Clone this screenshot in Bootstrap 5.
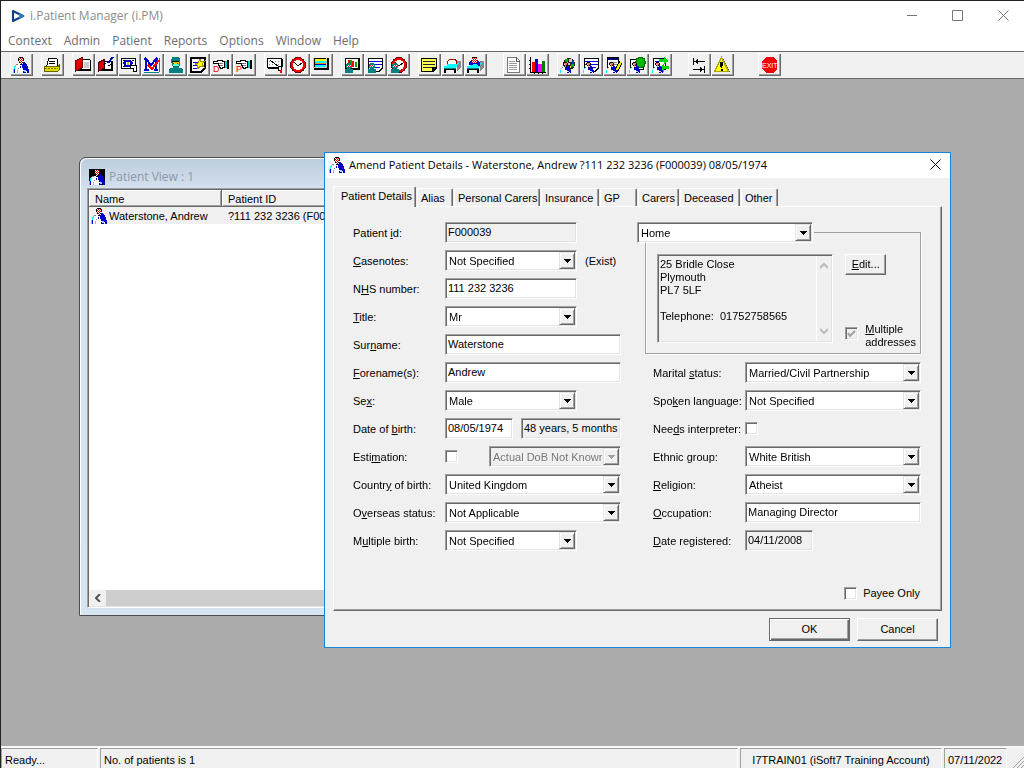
<!DOCTYPE html>
<html lang="en">
<head>
<meta charset="utf-8">
<meta name="viewport" content="width=device-width, initial-scale=1">
<title>i.Patient Manager (i.PM)</title>
<link href="https://cdn.jsdelivr.net/npm/bootstrap@5.3.0/dist/css/bootstrap.min.css" rel="stylesheet">
<script src="https://cdn.jsdelivr.net/npm/bootstrap@5.3.0/dist/js/bootstrap.bundle.min.js" defer></script>
<style>
:root{--face:#f0f0f0;--shade:#a0a0a0;--dark:#696969;--lite:#e3e3e3}
body{font:11px/13px "Liberation Sans",Arial,sans-serif;color:#000;background:var(--face)}
svg{display:block;flex:none}
button,input,select,textarea{font:inherit;color:inherit;border-radius:0}
.ui-font{font-family:"Open Sans","Segoe UI",sans-serif;font-size:12px;line-height:16px}
.cap-font{font-family:"Open Sans","Segoe UI",sans-serif;font-size:11px;line-height:16px}
.app{min-height:100vh;border-top:1px solid #222;border-left:1px solid #222}
.app-title{height:29px;color:#8c8c8c;padding:0 15px 0 10px;gap:5px}
.app-menu{height:21px;gap:12px;padding:0 7px}
.app-menu a{color:#6d6d6d;text-decoration:none}
.glyph-btn{border:0;background:none;padding:0;color:#777}
.toolbar{height:28px;padding:1px 9px 0;border-top:1px solid #696969;border-bottom:1px solid #696969;background:var(--face)}
.tool{width:23px;height:23px;border:0;padding:0;background:var(--face);box-shadow:inset 1px 1px #fff,inset -1px -1px var(--dark),inset -2px -2px var(--shade)}
.toolbar svg{shape-rendering:crispEdges}
.desk{background:#ababab;min-height:660px}
.statusbar{height:22px;border-top:2px solid #f8f8f8;gap:2px;background:var(--face)}
.pane{border:1px solid;border-color:var(--shade) #fff #fff var(--shade);height:21px;padding:5px 3px 0;white-space:nowrap}
.sunk{border:1px solid;border-color:var(--shade) #fff #fff var(--shade);box-shadow:inset 1px 1px var(--dark),inset -1px -1px var(--lite)}
.bevel{border:1px solid;border-color:#fff var(--dark) var(--dark) #fff;box-shadow:inset -1px -1px var(--shade);background:var(--face)}

.win-list{left:78px;top:78px;width:640px;height:459px;border:1px solid #4c4c54;border-radius:7px 7px 0 0;box-shadow:inset 1px 1px #fff;background:linear-gradient(#bccbdb,#d5e2f0 32px,#d7e4f2);padding:0 7px 7px}
.win-list .cap{height:30px;padding:8px 0 0 2px;color:#8e98a4;gap:4px}
.listbox{background:#fff}
.grid-list{border-collapse:separate;border-spacing:0;table-layout:fixed;width:100%;margin:1px}
.grid-list th{font-weight:400;height:17px;padding:2px 6px 0;background:var(--face);border-right:1px solid var(--dark);border-bottom:1px solid var(--dark);box-shadow:inset 1px 1px #fff,inset -1px -1px var(--shade)}
.grid-list td{height:17px;padding:1px 6px 0;background:var(--face);white-space:nowrap}
.grid-list td:first-child{padding:1px 2px 0}
.hscroll{height:16px;margin:0 1px 1px;background:#cdcdcd}
.hscroll button{width:17px;background:var(--face)}

.dlg{left:323px;top:73px;width:627px;border:1px solid #1883d7;background:var(--face)}
.dlg-cap{height:25px;background:#fff;padding:0 9px 2px 4px;gap:4px}
.dlg-body{padding:8px 8px 6px}
.tabs{gap:1px}
.tabs button{height:18px;background:var(--face);border:1px solid;border-color:#fff var(--dark) transparent #fff;border-bottom:0;box-shadow:inset -1px 0 var(--shade);border-radius:2px 2px 0 0;padding:1px 0 0 3px;text-align:left;white-space:nowrap}
.tabs button.active{height:21px;margin-bottom:-1px;padding:0 0 2px 7px;position:relative;z-index:1}
.tabpane{border:1px solid;border-color:#fff var(--dark) var(--dark) #fff;box-shadow:inset -1px -1px var(--shade);padding:15px 19px 10px}
.cols{gap:16px}
.col-l{width:268px}
.col-r{width:284px}
.frm{display:grid;grid-template-columns:92px 1fr;grid-auto-rows:21px;row-gap:7px;align-items:center}
.frm label,.frm .note{padding-top:2px}
.frm label,.chk-lbl{white-space:nowrap}
.chk-lbl{gap:7px}
.inset16{padding-left:16px}
.w-short{width:132px}
.w-date{width:68px}
.w-age{width:100px}
.fld{height:21px;padding:0 2px 2px;background:#fff;outline:0}
.fld[readonly]{background:var(--face)}
.combo{position:relative;height:21px;background:#fff}
.combo select{appearance:none;border:0;background:none;width:100%;height:19px;padding:1px 18px 0 3px;display:block;outline:0}
.combo select:disabled{color:#777;opacity:1}
.combo.off{background:var(--face)}
.combo .drop{position:absolute;right:1px;top:1px;width:16px;height:17px;pointer-events:none;display:flex;align-items:center;justify-content:center;border-color:var(--lite) var(--dark) var(--dark) var(--lite);box-shadow:inset 1px 1px #fff,inset -1px -1px var(--shade)}
.combo .drop svg{margin-left:1px}
.tick{appearance:none;width:13px;height:13px;margin:0;background:#fff;flex:none;display:block}
.tick:disabled{background:var(--face) url("data:image/svg+xml,%3Csvg xmlns='http://www.w3.org/2000/svg' viewBox='0 0 11 11'%3E%3Cpath d='M2 5l2 3 5-5' fill='none' stroke='%23a0a0a0' stroke-width='2'/%3E%3C/svg%3E") center/11px no-repeat}
.group{border:1px solid var(--shade);box-shadow:1px 1px #fff,inset 1px 0 #fff;margin:0 0 8px 8px;padding:0 4px 10px 11px;height:132px}
.group legend{float:none;font:inherit;width:177px;margin:0 0 11px -20px;padding:0 1px 0 0;background:var(--face)}
.addr{width:176px;height:89px}
.addr textarea{border:0;background:none;resize:none;padding:3px 2px;outline:0;overflow:hidden;width:100%}
.addr .vs{width:17px;padding:7px 0;border-left:1px solid #fff;margin:1px}
.addr-side{height:95px}
.btn-edit{width:41px;height:21px;padding:0}
.btn-dlg{width:81px;height:23px;padding:0}
.default-btn{border-color:var(--dark);box-shadow:inset 1px 1px #fff,inset -1px -1px var(--dark),inset -2px -2px var(--shade)}
.payee{gap:6px;padding:36px 2px 0 0}
.foot{gap:7px;padding:7px 4px 0}
</style>
</head>
<body>
<svg width="0" height="0" class="position-absolute" aria-hidden="true">
 <defs>
 <pattern id="chk" width="2" height="2" patternUnits="userSpaceOnUse"><path fill="#fff" d="M0 0h2v2H0z"/><path fill="#e00000" d="M0 0h1v1H0zM1 1h1v1H1z"/></pattern>
 <symbol id="doc" viewBox="0 0 16 16">
  <path fill="#fff" d="M3 7h6v9H1v-5h1V8h1z"/>
  <path fill="#0ff" d="M2 8h1v2H2v3H1v3H0v-4h1V9h1zM4 13h1v3H4z"/>
  <path fill="#0000c8" d="M1 12h1v4H1zM10 5h2v1h1v1h1v2h1v3h1v4h-2v-2h-1v2H9v-2H8v-3H7V9h2V7h1z"/>
  <path fill="#fff" d="M8 9h1v2h1v2h2v1h-2v2H8z"/><path fill="#9cc4ff" d="M11 13h2v2h-2z"/>
  <path fill="#808080" d="M3 7h2v1H3zM5 11h1v1H5z"/>
  <path fill="url(#chk)" d="M6 1h4v5H9v2H7V6H6z"/><path fill="#000" d="M6 0h4v1H6zM5 1h1v3H5zM10 1h1v3h-1zM6 5h1v1H6zM9 5h1v1H9zM7 7h2v1H7z"/>
 </symbol>
 <symbol id="nurse" viewBox="0 0 8 10"><path fill="#008080" d="M2 0h4v1h1v4H6v1h2v4H0V6h2V5H1V1h1z"/><path fill="url(#chk)" d="M2 2h4v2H2z"/></symbol>
 <symbol id="hand" viewBox="0 0 16 9"><path fill="#000" d="M0 1h4V0h6v1h2v7h-2v1H7V8H6V6H5V4H0z"/><path fill="#fff" d="M1 2h4V1h4v1h2v5H9v1H8V7H7V5H6V3H1z"/><path fill="#777" d="M6 3h4v1H6zM7 5h3v1H7z"/><path fill="#0cc" d="M12 1h2v7h-2z"/><path fill="#000" d="M14 0h2v9h-2z"/></symbol>
 <symbol id="clock" viewBox="0 0 16 16"><circle cx="8" cy="8" r="7" fill="#fff" stroke="#700000" stroke-width="2"/><circle cx="8" cy="8" r="6" fill="none" stroke="#f00000" stroke-width="2"/><path stroke="#000" fill="none" d="M4 5l4 4 4-3"/></symbol>
 <symbol id="bed" viewBox="0 0 18 12"><path fill="#888" d="M14 0h4v6l-4 4z"/><path fill="#0ff" d="M4 2h12l-3 5H1V5h3z"/><path fill="#008080" d="M1 7h12v1H1z"/><path fill="#000" d="M1 8h12v1H1zM1 9h2v3H1zM11 9h2v3h-2z"/></symbol>
 <symbol id="lines" viewBox="0 0 15 14"><path fill="#000" d="M0 0h15v10l-4 4H0z"/><path fill="#fff" d="M1 1h13v8l-4 4H1z"/><path fill="#00d" d="M1 3h13v1H1zM1 6h13v1H1zM1 9h11v1H1z"/></symbol>
 <symbol id="down" viewBox="0 0 7 4"><path fill="currentColor" d="M0 0h7v1H6v1H5v1H4v1H3V3H2V2H1V1H0z"/></symbol>
 </defs>
</svg>

<div class="app d-flex flex-column">
<header>
 <div class="app-title bg-white d-flex align-items-center ui-font">
  <svg width="14" height="14" viewBox="0 0 14 14"><path d="M2 2l10 5-10 5z" fill="#fff" stroke="#123f7c" stroke-width="2" stroke-linejoin="round"/><path d="M8 5l4 2-4 2" fill="none" stroke="#2b78b5" stroke-width="2"/></svg>
  <span class="flex-grow-1">i.Patient Manager (i.PM)</span>
  <div class="d-flex" style="gap:35px">
   <button class="glyph-btn" aria-label="Minimise"><svg width="10" height="11" viewBox="0 0 10 11"><path d="M0 5.500h10" stroke="currentColor"/></svg></button>
   <button class="glyph-btn" aria-label="Maximise"><svg width="11" height="11" viewBox="0 0 11 11"><path d="M.5.500h10v10H.5z" fill="none" stroke="currentColor"/></svg></button>
   <button class="glyph-btn" aria-label="Close"><svg width="11" height="11" viewBox="0 0 11 11"><path d="M.5.500l10 10M10.500.500l-10 10" stroke="currentColor"/></svg></button>
  </div>
 </div>
 <nav class="app-menu bg-white d-flex align-items-center ui-font"><a href="#">Context</a><a href="#">Admin</a><a href="#">Patient</a><a href="#">Reports</a><a href="#">Options</a><a href="#">Window</a><a href="#">Help</a></nav>
 <div class="toolbar d-flex" role="toolbar" aria-label="Main tools">
  <div class="d-flex me-2"><button class="tool" aria-label="Patient"><svg width="23" height="22"><use href="#doc" x="3" y="3" width="16" height="16"/></svg></button></div>
  <div class="d-flex me-2"><button class="tool" aria-label="Files"><svg width="23" height="22"><path fill="#fff" stroke="#000" d="M7.500 4.500h8l1 1v7h-11l1-3z"/><path stroke="#000" d="M8 7.500h6M8 9.500h6"/><path fill="#dd0" stroke="#660" d="M3.500 12.500h14l1-2v5l-2 2h-13z"/><path stroke="#886800" stroke-dasharray="2 1" d="M4 14.500h13"/></svg></button></div>
  <div class="d-flex me-2">
   <button class="tool" aria-label="Open record"><svg width="23" height="22"><path fill="#000" d="M9 5h9v1h1v11H5v-2h4z"/><path fill="#fff" d="M10 6h8v9h-8z"/><path d="M12 8h5v6h-5z" fill="#ccc"/><path fill="#e00000" stroke="#800000" d="M3.500 6.500l7-3v10l-7 4z"/></svg></button>
   <button class="tool" aria-label="Edit record"><svg width="23" height="22"><path fill="#000" d="M8 7h10v10H5v-2h3z"/><path fill="#fff" d="M10 8h6v7h-6z"/><path fill="#e00000" stroke="#400" d="M3.500 8.500l6-3v8l-6 4z"/><path stroke="#00a" stroke-width="2" d="M18 3l-5 6"/><path stroke="#000" d="M8 11l3-2m2 3l5-3"/></svg></button>
   <button class="tool" aria-label="Find"><svg width="23" height="22"><path fill="#fff" stroke="#000" d="M3.500 4.500h14v10h-14z"/><path stroke="#000" stroke-dasharray="2 1" d="M5 6.500h11M5 12.500h6"/><path fill="#fff" stroke="#00c" stroke-width="2" d="M8 7h4l2 2-2 3H8L6 9z"/><path fill="#cc0" d="M9 8h2v3H9z"/><path fill="#fff" stroke="#000" d="M12.500 11.500h6v6h-3v-3h-3z"/></svg></button>
   <button class="tool" aria-label="Maternity"><svg width="23" height="22"><path fill="#fff" d="M3 4h15v14H3z"/><path stroke="#088" d="M18.500 4v14M3 18.500h15"/><path fill="none" stroke="#00c" stroke-width="2" d="M5 16V5l5 6 5-6v11M3 16h5M13 16h4M3 5h3M14 5h3"/><path fill="none" stroke="#f00" stroke-width="2" d="M7 11l4 4 7-9"/></svg></button>
   <button class="tool" aria-label="Theatre"><svg width="23" height="22"><path fill="#008080" d="M8 3h7v1h1v8h-1v2h3v1h1v4H5v-4h1v-1h3v-2H8V9H7V5h1z"/><path fill="#000" d="M8 7h7v1H8z"/><path fill="#fc0" d="M9 8h6v2H9z"/><path fill="#c00" d="M9 9h1v1H9zM13 9h1v1h-1z"/><path fill="#5fb" d="M9 10h6v2H9z"/></svg></button>
   <button class="tool" aria-label="New event"><svg width="23" height="22"><path fill="#000" d="M3 3h16v11l-5 5H3z"/><path fill="#fff" d="M5 5h12v8l-4 4H5z"/><path stroke="#00c" d="M6 8.500h5M6 11.500h4M6 14.500h6"/><path fill="#ff0" stroke="#a80" d="M13 5l1 3 4-1-3 3 2 3-4-1-2 3-1-4-2-1 3-1z"/></svg></button>
   <button class="tool" aria-label="Discharge"><svg width="23" height="22"><use href="#hand" x="3" y="6" width="16" height="9"/><text x="3" y="18" font-size="9" fill="#f00000">D</text></svg></button>
   <button class="tool" aria-label="Point"><svg width="23" height="22"><use href="#hand" x="3" y="6" width="16" height="9"/><text x="3" y="18" font-size="9" fill="#f00000">P</text></svg></button>
  </div>
  <div class="d-flex me-2">
   <button class="tool" aria-label="Schedule"><svg width="23" height="22"><path fill="#fff" stroke="#000" d="M3.500 4.500h14v9h-14z"/><path stroke="#000" d="M4 14.500h10M18.500 5v8"/><path stroke="#888" stroke-dasharray="1 2" d="M5 7.500h12M5 10.500h12"/><path stroke="#000" d="M6 6l9 7"/><path fill="#fff" stroke="#000" d="M14.500 12.500h3v4h-3z"/><path fill="#f00" d="M16 16h2v3h-2z"/></svg></button>
   <button class="tool" aria-label="Clock"><svg width="23" height="22"><use href="#clock" x="3" y="3" width="16" height="16"/></svg></button>
   <button class="tool" aria-label="Screen"><svg width="23" height="22"><path fill="#000" d="M4 4h15v12H4z"/><path fill="#ccc" d="M3 4h14v10H3z"/><path fill="#000" d="M4 4h12v9H4z"/><path fill="#ff0" d="M5 5h11v2H5z"/><path fill="#0ff" d="M5 7h11v2H5zM5 11h11v2H5z"/><path fill="#00c" d="M5 10h11v1H5z"/><path fill="#f80" d="M5 9h11v1H5z"/></svg></button>
  </div>
  <div class="d-flex me-2">
   <button class="tool" aria-label="Ward chart"><svg width="23" height="22"><path fill="#000" d="M4 4h15v12H4z"/><path fill="#fff" d="M5 5h12v9H5z"/><path fill="#f00" d="M7 6h2v4H7zM11 7h2v6h-2z"/><path fill="#0a0" d="M9 6h2v6H9zM14 8h2v5h-2z"/><use href="#nurse" x="4" y="9" width="8" height="10"/></svg></button>
   <button class="tool" aria-label="Ward list"><svg width="23" height="22"><use href="#lines" x="4" y="4" width="15" height="14"/><use href="#nurse" x="4" y="9" width="8" height="10"/></svg></button>
   <button class="tool" aria-label="Ward time"><svg width="23" height="22"><use href="#clock" x="4" y="3" width="16" height="16"/><use href="#nurse" x="4" y="9" width="8" height="10"/></svg></button>
  </div>
  <div class="d-flex me-3">
   <button class="tool" aria-label="Notes"><svg width="23" height="22"><path fill="#000" d="M3 4h16v10l-4 4H3z"/><path fill="#ffff50" d="M4 5h14v8h-4v4H4z"/><path fill="#223" d="M5 7h12v1H5zM5 10h12v1H5zM5 13h9v1H5z"/></svg></button>
   <button class="tool" aria-label="Bed"><svg width="23" height="22"><use href="#bed" x="2" y="7" width="18" height="12"/><path fill="#fff" stroke="#a00000" d="M6.500 9.500v-2l2-2h6l1 2v2"/></svg></button>
   <button class="tool" aria-label="Bed patient"><svg width="23" height="22"><use href="#bed" x="2" y="7" width="18" height="12"/><path fill="#00c" d="M5 8l3-3h5l3 4v3h-2l-1-2h-3l-2 1H5z"/><path fill="url(#chk)" d="M8 4h5v5H8z"/><path d="M8 3h5v1H8z"/></svg></button>
  </div>
  <div class="d-flex me-2">
   <button class="tool" aria-label="Document"><svg width="23" height="22"><path fill="#fff" stroke="#777" d="M4.500 3.500h9l3 3v12h-12z"/><path fill="none" stroke="#555" d="M13.500 3v4h3"/><path stroke="#999" d="M6 7.500h6M6 9.500h8M6 11.500h8M6 13.500h8M6 15.500h8"/></svg></button>
   <button class="tool" aria-label="Chart"><svg width="23" height="22"><path stroke="#000" fill="none" d="M4.500 3v15.500H20M3 6.500h2M3 10.500h2M3 14.500h2M8.500 18v2M12.500 18v2M16.500 18v2"/><path fill="#f00" d="M6 8h3v10H6z"/><path fill="#00c" d="M9 5h3v13H9z"/><path fill="#f0f" d="M12 10h4v8h-4z"/><path fill="#008000" d="M16 7h3v11h-3z"/></svg></button>
  </div>
  <div class="d-flex me-3">
   <button class="tool" aria-label="Patient globe"><svg width="23" height="22"><circle cx="12" cy="10" r="6" fill="#222"/><path fill="#0a0" d="M8 5h3v3H8zM14 10h3v3h-3z"/><path fill="#ccc" d="M12 5h3v3h-3zM10 9h3v2h-3z"/><path fill="#04c" d="M15 7h2v3h-2z"/><path fill="#fc0" d="M9 8h2v1H9zM13 12h1v2h-1z"/><use href="#doc" x="3" y="8" width="11" height="11"/></svg></button>
   <button class="tool" aria-label="Patient list"><svg width="23" height="22"><use href="#lines" x="4" y="4" width="15" height="14"/><use href="#doc" x="3" y="8" width="11" height="11"/></svg></button>
   <button class="tool" aria-label="Patient edit"><svg width="23" height="22"><path fill="#000" d="M4 3h12v13H4z"/><path fill="#006" d="M5 4h10v2H5z"/><path fill="#fff" d="M5 6h10v9H5z"/><path stroke="#888" d="M6 8.500h8M6 10.500h8"/><path stroke="#000" stroke-width="4" d="M18 8l-5 9"/><path stroke="#ee0" stroke-width="2" d="M18 8l-5 9"/><use href="#doc" x="3" y="8" width="11" height="11"/></svg></button>
   <button class="tool" aria-label="Patient group"><svg width="23" height="22"><path fill="#000" d="M4 5h14v11H4z"/><path fill="#fff" d="M5 6h12v9H5z"/><path fill="#00b800" stroke="#070" d="M10.500 4.500h2v-1h4v1h2v3h1v2h-1v3h-2v1h-4v-1h-2v-3h-1v-2h1z"/><use href="#doc" x="3" y="8" width="11" height="11"/></svg></button>
   <button class="tool" aria-label="Patient transfer"><svg width="23" height="22"><path fill="#000" d="M4 4h13v12H4z"/><path fill="#fff" d="M5 5h11v10H5z"/><path stroke="#00c" d="M6 7.500h5M6 9.500h5"/><path fill="#00d800" d="M10 5h5V3l5 4-5 3V8h-5zM20 12h-5v-2l-5 4 5 4v-3h5z"/><use href="#doc" x="3" y="8" width="11" height="11"/></svg></button>
  </div>
  <div class="d-flex me-4">
   <button class="tool" aria-label="Swap"><svg width="23" height="22"><path stroke="#000" fill="none" d="M5.500 4v7M6 7.500h11M9.500 5v5M8.500 6v3M16.500 12v7M5 15.500h11M12.500 13v5M13.500 14v3"/></svg></button>
   <button class="tool" aria-label="Warning"><svg width="23" height="22"><path fill="#555" d="M12 4l7 14H6z"/><path fill="#ff0" stroke="#aa0" d="M10.500 3.500l7 14h-14z"/><path fill="#000" d="M9 8h3v3l-1 3h-1l-1-3zM10 15h2v2h-2z"/></svg></button>
  </div>
  <button class="tool" aria-label="Exit"><svg width="23" height="22"><path fill="#f00000" d="M8 3h7l4 4v8l-4 4H8l-4-4V7z"/><text x="4" y="14" font-size="7" fill="#fff">EXIT</text></svg></button>
 </div>
</header>

<main class="desk flex-grow-1 position-relative">
 <section class="win-list position-absolute d-flex flex-column">
  <div class="cap d-flex ui-font align-items-center"><svg width="16" height="16" class="bg-black"><use href="#doc" width="16" height="16"/></svg>Patient View : 1</div>
  <div class="listbox sunk flex-grow-1 d-flex flex-column">
   <table class="grid-list"><colgroup><col style="width:133px"><col></colgroup>
    <thead><tr><th>Name</th><th>Patient ID</th></tr></thead>
    <tbody><tr><td><div class="d-flex align-items-center"><svg width="16" height="16"><use href="#doc" width="16" height="16"/></svg><span style="padding-left:2px">Waterstone, Andrew</span></div></td><td>?111 232 3236 (F000039)</td></tr></tbody>
   </table>
   <div class="hscroll d-flex mt-auto"><button class="glyph-btn d-flex align-items-center justify-content-center" aria-label="Scroll left"><svg width="6" height="8" viewBox="0 0 6 8"><path d="M5 0L1 4l4 4" fill="none" stroke="#555" stroke-width="2"/></svg></button></div>
  </div>
 </section>

 <section class="dlg position-absolute" role="dialog" aria-labelledby="dlgTitle">
  <div class="dlg-cap d-flex align-items-center cap-font">
   <svg width="16" height="16"><use href="#doc" width="16" height="16"/></svg>
   <span id="dlgTitle" class="flex-grow-1">Amend Patient Details - Waterstone, Andrew ?111 232 3236 (F000039) 08/05/1974</span>
   <button class="glyph-btn text-black" aria-label="Close"><svg width="11" height="11" viewBox="0 0 11 11"><path d="M.5.500l10 10M10.500.500l-10 10" stroke="currentColor"/></svg></button>
  </div>
  <form class="dlg-body">
   <div class="tabs d-flex align-items-end" role="tablist">
    <button type="button" role="tab" class="active" style="width:83px">Patient Details</button><button type="button" role="tab" style="width:36px">Alias</button><button type="button" role="tab" style="width:86px">Personal Carers</button><button type="button" role="tab" style="width:58px">Insurance</button><button type="button" role="tab" style="width:37px">GP</button><button type="button" role="tab" style="width:41px">Carers</button><button type="button" role="tab" style="width:60px">Deceased</button><button type="button" role="tab" style="width:37px">Other</button>
   </div>
   <div class="tabpane">
    <div class="d-flex cols">
     <div class="col-l frm align-self-start">
      <label for="pid">Patient <u>i</u>d:</label><input id="pid" class="fld sunk w-short" readonly value="F000039">
      <label for="cn"><u>C</u>asenotes:</label><div class="d-flex align-items-center gap-2"><div class="combo sunk w-short"><select id="cn"><option>Not Specified</option></select><span class="drop bevel"><svg width="7" height="4"><use href="#down"/></svg></span></div><span class="note">(Exist)</span></div>
      <label for="nhs">N<u>H</u>S number:</label><input id="nhs" class="fld sunk w-short" value="111 232 3236" autofocus>
      <label for="ttl"><u>T</u>itle:</label><div class="combo sunk w-short"><select id="ttl"><option>Mr</option></select><span class="drop bevel"><svg width="7" height="4"><use href="#down"/></svg></span></div>
      <label for="sn">Sur<u>n</u>ame:</label><input id="sn" class="fld sunk" value="Waterstone">
      <label for="fn"><u>F</u>orename(s):</label><input id="fn" class="fld sunk" value="Andrew">
      <label for="sex">Se<u>x</u>:</label><div class="combo sunk w-short"><select id="sex"><option>Male</option></select><span class="drop bevel"><svg width="7" height="4"><use href="#down"/></svg></span></div>
      <label for="dob">Date of <u>b</u>irth:</label><div class="d-flex justify-content-between"><input id="dob" class="fld sunk w-date" value="08/05/1974"><input class="fld sunk w-age" readonly aria-label="Age" value="48 years, 5 months"></div>
      <label for="est">Esti<u>m</u>ation:</label><div class="d-flex justify-content-between align-items-center"><input type="checkbox" id="est" class="tick sunk"><div class="combo sunk w-short off"><select disabled aria-label="Estimation type"><option>Actual DoB Not Known</option></select><span class="drop bevel" style="color:#a0a0a0"><svg width="7" height="4"><use href="#down"/></svg></span></div></div>
      <label for="cob">Countr<u>y</u> of birth:</label><div class="combo sunk"><select id="cob"><option>United Kingdom</option></select><span class="drop bevel"><svg width="7" height="4"><use href="#down"/></svg></span></div>
      <label for="os">O<u>v</u>erseas status:</label><div class="combo sunk"><select id="os"><option>Not Applicable</option></select><span class="drop bevel"><svg width="7" height="4"><use href="#down"/></svg></span></div>
      <label for="mb">M<u>u</u>ltiple birth:</label><div class="combo sunk w-short"><select id="mb"><option>Not Specified</option></select><span class="drop bevel"><svg width="7" height="4"><use href="#down"/></svg></span></div>
     </div>
     <div class="col-r">
      <fieldset class="group">
       <legend><div class="combo sunk"><select aria-label="Address type"><option>Home</option></select><span class="drop bevel"><svg width="7" height="4"><use href="#down"/></svg></span></div></legend>
       <div class="d-flex justify-content-between">
        <div class="addr sunk d-flex"><textarea readonly aria-label="Address">25 Bridle Close
Plymouth
PL7 5LF

Telephone:  01752758565</textarea>
         <div class="vs d-flex flex-column justify-content-between align-items-center"><svg width="8" height="6" viewBox="0 0 8 6"><path d="M0 5l4-4 4 4" fill="none" stroke="#bbb" stroke-width="2"/></svg><svg width="8" height="6" viewBox="0 0 8 6"><path d="M0 1l4 4 4-4" fill="none" stroke="#bbb" stroke-width="2"/></svg></div></div>
        <div class="addr-side d-flex flex-column justify-content-between">
         <button type="button" class="btn-edit bevel"><u>E</u>dit...</button>
         <div class="d-flex chk-lbl"><input type="checkbox" id="ma" class="tick sunk mt-1" checked disabled><label for="ma"><u>M</u>ultiple<br>addresses</label></div>
        </div>
       </div>
      </fieldset>
      <div class="inset16"><div class="frm">
       <label for="ms">Marital <u>s</u>tatus:</label><div class="combo sunk"><select id="ms"><option>Married/Civil Partnership</option></select><span class="drop bevel"><svg width="7" height="4"><use href="#down"/></svg></span></div>
       <label for="sl">Spo<u>k</u>en language:</label><div class="combo sunk"><select id="sl"><option>Not Specified</option></select><span class="drop bevel"><svg width="7" height="4"><use href="#down"/></svg></span></div>
       <label for="ni">Nee<u>d</u>s interpreter:</label><input type="checkbox" id="ni" class="tick sunk">
       <label for="eg">Ethnic <u>g</u>roup:</label><div class="combo sunk"><select id="eg"><option>White British</option></select><span class="drop bevel"><svg width="7" height="4"><use href="#down"/></svg></span></div>
       <label for="rl"><u>R</u>eligion:</label><div class="combo sunk"><select id="rl"><option>Atheist</option></select><span class="drop bevel"><svg width="7" height="4"><use href="#down"/></svg></span></div>
       <label for="oc"><u>O</u>ccupation:</label><input id="oc" class="fld sunk" value="Managing Director">
       <label for="dr"><u>D</u>ate registered:</label><input id="dr" class="fld sunk w-date" readonly value="04/11/2008">
      </div></div>
     </div>
    </div>
    <div class="payee d-flex justify-content-end align-items-center"><input type="checkbox" id="po" class="tick sunk"><label for="po">Payee Only</label></div>
   </div>
   <div class="foot d-flex justify-content-end"><button type="submit" class="btn-dlg bevel default-btn">OK</button><button type="button" class="btn-dlg bevel">Cancel</button></div>
  </form>
 </section>
</main>

<footer class="statusbar d-flex">
 <div class="pane" style="width:97px">Ready...</div><div class="pane flex-grow-1">No. of patients is 1</div><div class="pane text-center" style="width:202px">I7TRAIN01 (iSoft7 Training Account)</div><div class="pane" style="width:63px">07/11/2022</div>
 <svg width="15" height="20" viewBox="0 0 15 20"><path d="M4 20L15 9M8 20l7-7M12 20l3-3" stroke="#a0a0a0" stroke-width="1"/></svg>
</footer>
</div>
</body>
</html>
